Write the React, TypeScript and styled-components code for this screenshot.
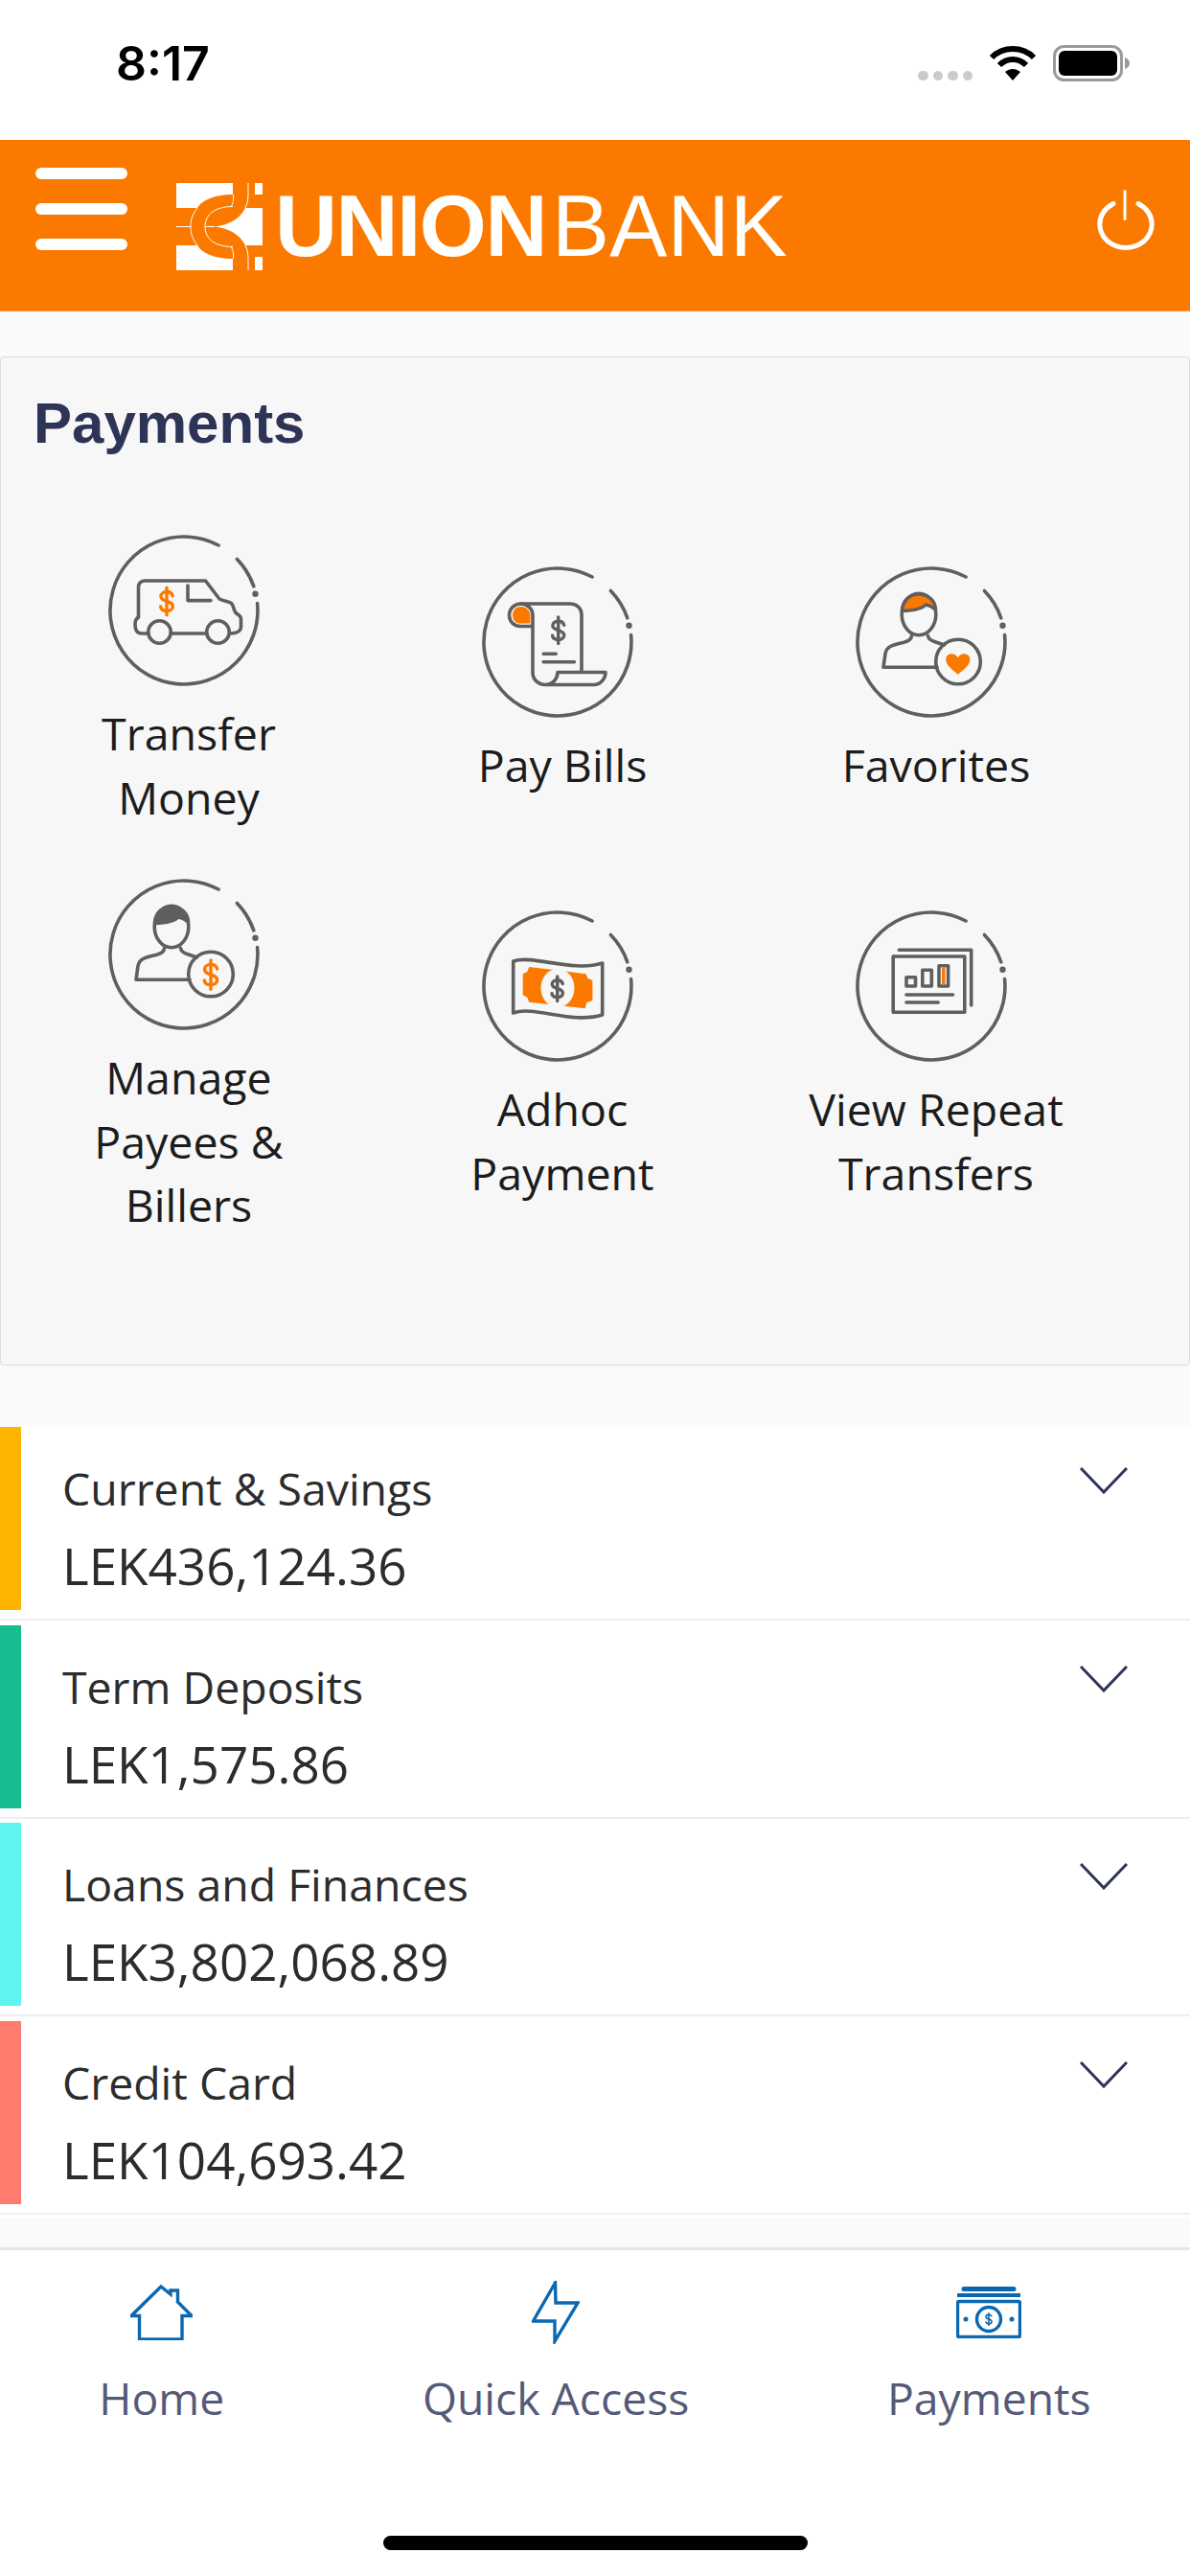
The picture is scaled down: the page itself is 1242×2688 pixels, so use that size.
import React from 'react';
import styled, { createGlobalStyle } from 'styled-components';

const ORANGE = '#fc7900';
const GREY = '#5f5f5f';
const BLUE = '#0a68b2';
const NAVY = '#2e3456';

const GlobalStyle = createGlobalStyle`
  html, body {
    margin: 0;
    padding: 0;
    background: #fafafa;
  }
  * {
    box-sizing: border-box;
  }
`;

const Page = styled.div`
  width: 1242px;
  height: 2688px;
  display: flex;
  flex-direction: column;
  background: #fafafa;
  font-family: 'Open Sans', 'Liberation Sans', sans-serif;
  overflow: hidden;
`;

const StatusBar = styled.div`
  height: 146px;
  flex: none;
  background: #fff;
  display: flex;
  justify-content: space-between;
  padding: 36px 63px 0 121px;
`;

const Time = styled.div`
  font-family: Inter, 'Liberation Sans', sans-serif;
  font-weight: 600;
  font-size: 50px;
  line-height: 60px;
  color: #000;
`;

const StatusIcons = styled.div`
  display: flex;
  align-items: flex-start;
  padding-top: 11px;
`;

const CellDots = styled.div`
  display: flex;
  gap: 5px;
  margin: 27px 17px 0 0;
`;

const CellDot = styled.span`
  width: 10.5px;
  height: 10px;
  border-radius: 5px;
  background: #cbcbcb;
`;

const Battery = styled.svg`
  margin-left: 17px;
`;

const Header = styled.header`
  height: 179px;
  flex: none;
  background: ${ORANGE};
  border-bottom: 1px solid #fd9a42;
  display: flex;
  align-items: flex-start;
  padding: 29px 37px 0;
`;

const Burger = styled.div`
  width: 96px;
  display: flex;
  flex-direction: column;
  gap: 25px;
`;

const BurgerBar = styled.span`
  height: 12px;
  border-radius: 6px;
  background: #fff;
`;

const Logo = styled.div`
  display: flex;
  align-items: flex-start;
  margin: 16px 0 0 51px;
`;

const BrandText = styled.div`
  font-family: 'Liberation Sans', Arial, sans-serif;
  font-size: 90px;
  line-height: 66px;
  margin: 12px 0 0 13px;
  letter-spacing: 0.2px;
  color: #fff;
  white-space: nowrap;
  b {
    font-weight: 700;
    letter-spacing: -1.4px;
    margin-right: 6px;
  }
`;

const PowerButton = styled.svg`
  margin: 22px 0 0 auto;
`;

const Panel = styled.section`
  height: 1053px;
  flex: none;
  margin-top: 47px;
  background: #f7f7f7;
  border: 1px solid #dcdcdc;
  border-radius: 4px;
  padding-top: 34px;
`;

const PanelTitle = styled.h1`
  margin: 0 0 80px 34px;
  font-family: 'Liberation Sans', Arial, sans-serif;
  font-weight: 700;
  font-size: 60px;
  line-height: 70px;
  color: ${NAVY};
`;

const ActionGrid = styled.div`
  display: grid;
  grid-template-columns: repeat(3, 390px);
  row-gap: 51px;
  align-items: center;
  padding-left: 1px;
`;

const Action = styled.div`
  display: flex;
  flex-direction: column;
  align-items: center;
`;

const ActionIcon = styled.svg`
  margin-right: 11px;
  fill: none;
  stroke: ${GREY};
  stroke-width: 3.6;
  stroke-linecap: round;
  stroke-linejoin: round;
`;

const ActionLabel = styled.div`
  margin-top: 15px;
  text-align: center;
  font-size: 46.5px;
  line-height: 66.5px;
  color: #1c1c1c;
`;

const AccountList = styled.section`
  margin-top: 64px;
  flex: none;
`;

const AccountRow = styled.div`
  height: 206.5px;
  padding-bottom: 4.5px;
  background: #fff;
`;

const RowInner = styled.div`
  height: 202px;
  display: flex;
  align-items: flex-start;
  border-bottom: 2px solid #eeeef1;
`;

const ColorBar = styled.div<{ $color: string }>`
  width: 22px;
  height: 191px;
  flex: none;
  background: ${({ $color }) => $color};
`;

const AccountBody = styled.div`
  flex: 1;
  padding: 32px 0 0 43px;
  color: #2c2c2c;
`;

const AccountName = styled.div`
  font-size: 46.4px;
  line-height: 64px;
  margin-bottom: 14px;
`;

const AccountAmount = styled.div`
  font-size: 53px;
  line-height: 70px;
`;

const Chevron = styled.svg`
  margin: 42px 65px 0 0;
  fill: none;
  stroke: ${NAVY};
  stroke-width: 3;
`;

const TabBar = styled.nav`
  margin-top: auto;
  height: 343px;
  flex: none;
  background: #fff;
  border-top: 3px solid #e6e6e6;
  display: flex;
  flex-direction: column;
`;

const Tabs = styled.div`
  display: flex;
  justify-content: space-around;
  height: 298px;
`;

const Tab = styled.div`
  display: flex;
  flex-direction: column;
  align-items: center;
`;

const TabIconSlot = styled.div`
  height: 100px;
  padding-top: 30px;
  display: flex;
  align-items: center;
`;

const TabIcon = styled.svg`
  fill: none;
  stroke: ${BLUE};
  stroke-width: 3.4;
`;

const TabLabel = styled.div`
  margin-top: 23px;
  font-size: 46.3px;
  line-height: 64px;
  color: #555a78;
`;

const HomeIndicator = styled.div`
  width: 443px;
  height: 15px;
  border-radius: 8px;
  background: #000;
  align-self: center;
`;

function Dollar({ x, y, h, color, width = 3.4 }: { x: number; y: number; h: number; color: string; width?: number }) {
  const s = h / 24;
  return (
    <g transform={`translate(${x - 12 * s} ${y - 12 * s}) scale(${s})`} stroke={color} strokeWidth={width / s} fill="none">
      <path d="M16.8 7.6C16.3 5.5 14.5 4.3 12 4.3 9 4.3 7.3 6 7.3 8c0 2.5 2.5 3.3 4.7 4 2.6.7 4.9 1.5 4.9 4 0 2.3-2 3.7-4.9 3.7-2.6 0-4.6-1.2-4.9-3.4" />
      <path d="M12 1v22" />
    </g>
  );
}

function Ring() {
  return (
    <>
      <path d="M156.6 72.6A77 77 0 1 1 116.1 12" />
      <path d="M135.4 26.5A77 77 0 0 1 152.8 54.9" />
      <circle cx="154.5" cy="62.7" r="1.4" fill={GREY} />
    </>
  );
}

function Person({ hair }: { hair: string }) {
  return (
    <>
      <ellipse cx="67" cy="51" rx="17.8" ry="21.8" />
      <path
        d="M49.5 47.5C50 36 58 30 67 30c9 0 17 6 17.5 16-3.500-2.500-7.500-4.800-10.500-5-4 5-14 6.200-24.500 6.500Z"
        fill={hair}
      />
      <path d="M59.500 73.500c-.5 4-3 5.500-8 6.800C40 83 33.500 84 32 92l-2 14.200h56" />
      <path d="M76.500 73.500c.5 3 2.500 4.500 6 5.700l11 3.800" />
      <circle cx="108" cy="100.500" r="23.300" />
    </>
  );
}

function VanIcon() {
  return (
    <>
      <Ring />
      <path d="M32.500 87V56c0-4 2-6.500 6-7h64l14.500 19c6 3 11 2.500 13 5 2 3 2 7 4 9.500 3 2 5.500 3 5.500 6V97c0 4-4 7-11 7" />
      <path d="M32.500 87c-3 2-3.500 4-3.500 7 0 7 2 10 7 10h7" />
      <circle cx="54.500" cy="102.500" r="11.800" />
      <circle cx="115.500" cy="102.500" r="11.800" />
      <path d="M66.300 104h37.400" />
      <path d="M84 54v15.600h24" />
      <Dollar x={62} y={70.500} h={31} color={ORANGE} />
    </>
  );
}

function BillIcon() {
  return (
    <>
      <Ring />
      <path d="M51.500 60.500V52c0-5-4.500-9-10-9-5.500 0-8.500 4-8.500 9 0 4 2.500 8.500 7 8.500Z" fill={ORANGE} stroke="none" />
      <path d="M54 63.500H41c-7 0-11.500-5.500-11.500-11.500 0-7 5.500-12 12-12 6.500 0 12.500 5 12.500 12v60c0 7 6 12.500 13 12.500h51c7 0 12-6.500 12-13H80c0 6.500-5 13-13 13" />
      <path d="M41.500 40H93c7 0 12 5 12 11v60" />
      <path d="M65.200 92.200h13M65.200 100.800h32.200" />
      <Dollar x={80.700} y={67.800} h={30} color={GREY} />
    </>
  );
}

function FavoriteIcon() {
  return (
    <>
      <Ring />
      <Person hair={ORANGE} />
      <path
        d="M107.800 113.800C101 108 95.200 104 95.200 98c0-3.500 2.800-5.800 5.800-5.800 3 0 5.300 1.500 6.800 4 1.500-2.500 3.800-4 6.800-4 3 0 5.800 2.300 5.800 5.800 0 6-5.800 10-12.600 15.800Z"
        fill={ORANGE}
        stroke="none"
      />
    </>
  );
}

function PayeeIcon() {
  return (
    <>
      <Ring />
      <Person hair={GREY} />
      <Dollar x={108} y={101} h={33} color={ORANGE} />
    </>
  );
}

function AdhocIcon() {
  return (
    <>
      <Ring />
      <path d="M33.700 54C55 47 95 66 126.700 56v54c-31.700 10-71.700-10-93-2Z" />
      <path
        d="M50.200 60 80 63.500 109.500 67.300 111.400 71.700 116.400 74V95L110.300 97.300 108.700 103.300 80 100 50.200 96.700 48.300 91.700 43.700 89.300V67.300L48.300 65Z"
        fill={ORANGE}
        stroke="none"
      />
      <ellipse cx="80" cy="82" rx="17.500" ry="20" fill="#f7f7f7" stroke="none" />
      <Dollar x={79.700} y={82.700} h={28} color={GREY} />
    </>
  );
}

function RepeatIcon() {
  return (
    <>
      <Ring />
      <path d="M46.300 42.300h75.400V100" />
      <rect x="40.200" y="49" width="74.600" height="58.300" />
      <rect x="54" y="70.700" width="9.500" height="9.300" />
      <rect x="70.800" y="63.300" width="9.500" height="16.700" />
      <rect x="88" y="58.700" width="9.600" height="21.300" />
      <path d="M92.800 62v15" stroke={ORANGE} />
      <path d="M54 89h48.500M54 97h33.200" />
    </>
  );
}

function ChainLogo() {
  return (
    <svg width="90" height="91" viewBox="0 0 90 91">
      <rect width="90" height="91" fill={ORANGE} />
      <g fill="#fff">
        <path d="M0 0H59V12C38 12 26 19 22 26H0Z" />
        <path d="M0 91H59V79C38 79 26 72 22 65H0Z" />
        <path d="M90 26H72C66 38 54 44 40 45.500 54 47 66 53 72 65H90Z" />
        <path d="M82 0H90V12H82ZM82 77H90V91H82Z" />
      </g>
      <g fill="none" stroke="#fff" strokeWidth="1">
        <path d="M22 26C17 32 15 38 15 45.500 15 53 17 59 22 65" />
        <path d="M0 45.500H15M30 45.500H40" />
        <path d="M59 24.500C40 24.500 30 33 30 45.500 30 58 40 66.500 59 66.500" />
        <path d="M75 0V12C75 18 74 22 72 26M75 91V79C75 73 74 69 72 65" />
        <path d="M59.500 12C60 18 59 22 57 25M59.500 79C60 73 59 69 57 66" />
      </g>
    </svg>
  );
}

const ACTIONS = [
  { id: 'transfer', icon: <VanIcon />, label: ['Transfer', 'Money'] },
  { id: 'bills', icon: <BillIcon />, label: ['Pay Bills'] },
  { id: 'favorites', icon: <FavoriteIcon />, label: ['Favorites'] },
  { id: 'payees', icon: <PayeeIcon />, label: ['Manage', 'Payees &', 'Billers'] },
  { id: 'adhoc', icon: <AdhocIcon />, label: ['Adhoc', 'Payment'] },
  { id: 'repeat', icon: <RepeatIcon />, label: ['View Repeat', 'Transfers'] },
];

const ACCOUNTS = [
  { name: 'Current & Savings', amount: 'LEK436,124.36', color: '#ffb500' },
  { name: 'Term Deposits', amount: 'LEK1,575.86', color: '#17bc92' },
  { name: 'Loans and Finances', amount: 'LEK3,802,068.89', color: '#5ff4f2' },
  { name: 'Credit Card', amount: 'LEK104,693.42', color: '#ff7b6e' },
];

export default function App() {
  return (
    <Page>
      <GlobalStyle />
      <StatusBar>
        <Time>8:17</Time>
        <StatusIcons>
          <CellDots>
            <CellDot />
            <CellDot />
            <CellDot />
            <CellDot />
          </CellDots>
          <svg width="50" height="37" viewBox="0 0 50 37">
            <path d="M3 13C15 1 35 1 47 13" fill="none" stroke="#000" strokeWidth="6" />
            <path d="M11 21C19 13 31 13 39 21" fill="none" stroke="#000" strokeWidth="6" />
            <path d="M25 37 17 28c5-4 11-4 16 0Z" fill="#000" />
          </svg>
          <Battery width="80" height="38" viewBox="0 0 80 38">
            <rect x="1.500" y="1.500" width="70" height="35" rx="10" fill="none" stroke="#9a9a9a" strokeWidth="3" />
            <rect x="6" y="6" width="61" height="26" rx="6" fill="#000" />
            <path d="M75 13c3 1 5 3 5 6s-2 5-5 6Z" fill="#9a9a9a" />
          </Battery>
        </StatusIcons>
      </StatusBar>

      <Header>
        <Burger>
          <BurgerBar />
          <BurgerBar />
          <BurgerBar />
        </Burger>
        <Logo>
          <ChainLogo />
          <BrandText>
            <b>UNION</b>BANK
          </BrandText>
        </Logo>
        <PowerButton width="60" height="64" viewBox="0 0 60 64" fill="none" stroke="#fff" strokeWidth="5" strokeLinecap="round">
          <path d="M17 15.500C8 20.500 2.800 28 2.800 37a27.200 24.500 0 0 0 54.400 0c0-9-5.200-16.500-14.200-21.500" />
          <path d="M29 2.500v29" strokeWidth="3" />
        </PowerButton>
      </Header>

      <Panel>
        <PanelTitle>Payments</PanelTitle>
        <ActionGrid>
          {ACTIONS.map(action => (
            <Action key={action.id}>
              <ActionIcon width="160" height="160" viewBox="0 0 160 160">
                {action.icon}
              </ActionIcon>
              <ActionLabel>
                {action.label.map(line => (
                  <div key={line}>{line}</div>
                ))}
              </ActionLabel>
            </Action>
          ))}
        </ActionGrid>
      </Panel>

      <AccountList>
        {ACCOUNTS.map(account => (
          <AccountRow key={account.name}>
            <RowInner>
              <ColorBar $color={account.color} />
              <AccountBody>
                <AccountName>{account.name}</AccountName>
                <AccountAmount>{account.amount}</AccountAmount>
              </AccountBody>
              <Chevron width="50" height="28" viewBox="0 0 50 28">
                <path d="M1 1l24 25L49 1" />
              </Chevron>
            </RowInner>
          </AccountRow>
        ))}
      </AccountList>

      <TabBar>
        <Tabs>
          <Tab>
            <TabIconSlot>
              <TabIcon width="65" height="58" viewBox="0 0 65 58">
                <path d="M1 32.500 32 2l10 8V6h7.500v12L64 32.500H54V57H9.500V32.500Z" />
              </TabIcon>
            </TabIconSlot>
            <TabLabel>Home</TabLabel>
          </Tab>
          <Tab>
            <TabIconSlot>
              <TabIcon width="50" height="66" viewBox="0 0 50 66">
                <path d="M24.500 2 1.500 42H24V63L48 23H25Z" />
              </TabIcon>
            </TabIconSlot>
            <TabLabel>Quick Access</TabLabel>
          </Tab>
          <Tab>
            <TabIconSlot>
              <TabIcon width="68" height="54" viewBox="0 0 68 54">
                <path d="M8 0h52a2.500 2.500 0 0 1 0 5H8a2.500 2.500 0 0 1 0-5ZM1 7h66v4H1Z" fill={BLUE} stroke="none" />
                <rect x="1.500" y="15.500" width="65" height="37" rx="1.500" />
                <circle cx="34" cy="34" r="12.500" />
                <circle cx="10" cy="34" r="2.500" fill={BLUE} stroke="none" />
                <circle cx="58" cy="34" r="2.500" fill={BLUE} stroke="none" />
                <Dollar x={34} y={34} h={15} color={BLUE} width={1.600} />
              </TabIcon>
            </TabIconSlot>
            <TabLabel>Payments</TabLabel>
          </Tab>
        </Tabs>
        <HomeIndicator />
      </TabBar>
    </Page>
  );
}
